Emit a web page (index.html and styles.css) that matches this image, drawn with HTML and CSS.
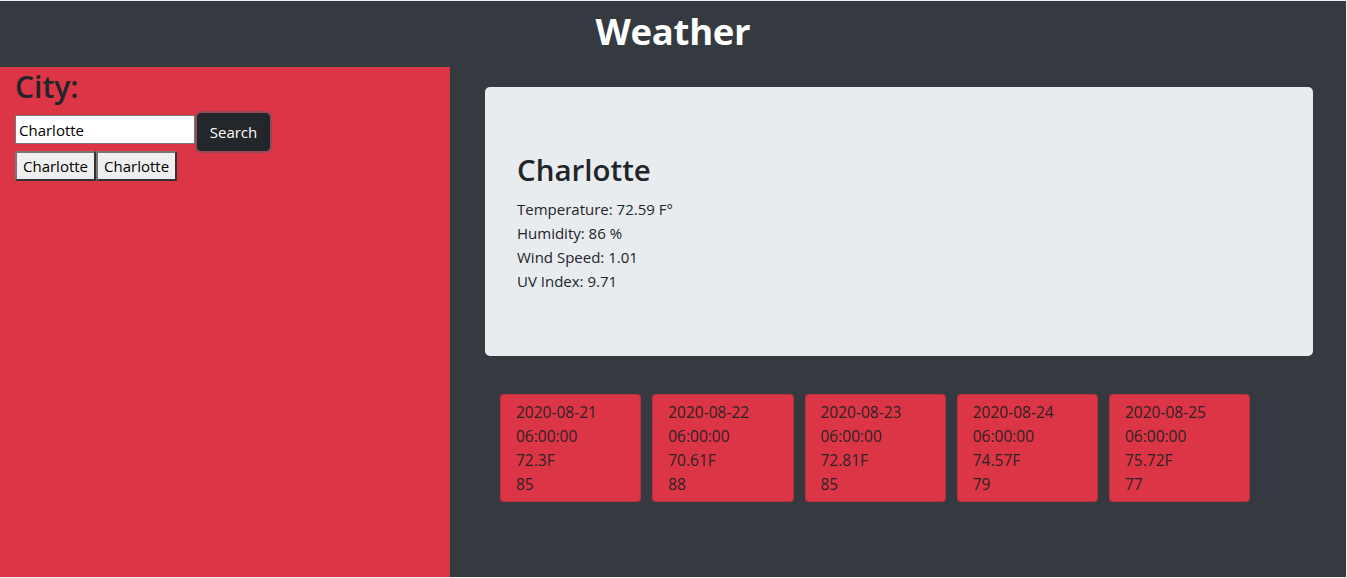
FILE: index.html
```html
<!DOCTYPE html>
<html>
<head>
<meta charset="utf-8">
<link rel="stylesheet" href="styles.css">
</head>
<body>
<div class="app">
  <header class="topbar"><h1 class="title">Weather</h1></header>
  <div class="main">
    <aside class="sidebar">
      <h2 class="city-label">City:</h2>
      <div class="search-row">
        <input class="city-input" type="text" value="Charlotte">
        <button class="search-btn">Search</button>
      </div>
      <div class="history">
        <button class="hist-btn">Charlotte</button><button class="hist-btn">Charlotte</button>
      </div>
    </aside>
    <section class="content">
      <div class="jumbo">
        <h2 class="jumbo-city">Charlotte</h2>
        <div class="stat">Temperature: 72.59 F°</div>
        <div class="stat">Humidity: 86 %</div>
        <div class="stat">Wind Speed: 1.01</div>
        <div class="stat">UV Index: 9.71</div>
      </div>
      <div class="forecast">
        <div class="fcard"><div>2020-08-21</div><div>06:00:00</div><div>72.3F</div><div>85</div></div>
        <div class="fcard"><div>2020-08-22</div><div>06:00:00</div><div>70.61F</div><div>88</div></div>
        <div class="fcard"><div>2020-08-23</div><div>06:00:00</div><div>72.81F</div><div>85</div></div>
        <div class="fcard"><div>2020-08-24</div><div>06:00:00</div><div>74.57F</div><div>79</div></div>
        <div class="fcard"><div>2020-08-25</div><div>06:00:00</div><div>75.72F</div><div>77</div></div>
      </div>
    </section>
  </div>
</div>
</body>
</html>
```
FILE: styles.css
```css
html, body {
  margin: 0;
  padding: 0;
}
body {
  background: #f0f0f0;
  font-family: "Open Sans", "Noto Sans", sans-serif;
  font-size: 16px;
  color: #212529;
}
.app {
  margin: 1px 1px 1px 0;
  height: 576px;
  background: #343a40;
  display: flex;
  flex-direction: column;
}
.topbar {
  height: 66px;
  flex: none;
  display: flex;
  justify-content: center;
}
.title {
  margin: 6px 0 0 0;
  font-size: 36.5px;
  line-height: 48px;
  font-weight: 700;
  color: #ffffff;
  letter-spacing: -0.3px;
}
.main {
  flex: 1;
  display: flex;
}
.sidebar {
  width: 420px;
  flex: none;
  background: #dc3545;
  padding: 0 15px;
}
.city-label {
  margin: 1px 0 7px 0;
  font-size: 30px;
  line-height: 38px;
  font-weight: 600;
  color: #212529;
}
.search-row {
  display: flex;
  align-items: flex-start;
  height: 38px;
}
.city-input {
  width: 180px;
  height: 29px;
  margin: 2px 0 0 0;
  box-sizing: border-box;
  border: 1px solid #767676;
  padding: 1px 3px;
  font-family: inherit;
  font-size: 15px;
  color: #000;
  background: #fff;
}
.search-btn {
  margin-left: 2px;
  height: 38px;
  width: 73px;
  border: 1px solid #212529;
  border-radius: 4px;
  background: #23272b;
  color: #fff;
  font-family: inherit;
  font-size: 15px;
  box-shadow: 0 0 0 2px rgba(130, 80, 90, 0.8);
  padding: 0;
}
.history {
  display: flex;
}
.hist-btn {
  height: 30px;
  box-sizing: border-box;
  border: 2px solid;
  border-color: #767676 #333 #333 #767676;
  background: #efefef;
  color: #000;
  font-family: inherit;
  font-size: 15px;
  padding: 0 6px;
  margin: 0;
}
.content {
  flex: 1;
  padding: 20px 33px 0 35px;
}
.jumbo {
  background: #e9ecef;
  border-radius: 5px;
  padding: 64px 32px;
  height: 269px;
  box-sizing: border-box;
}
.jumbo-city {
  margin: 0 0 8px 0;
  font-size: 29.5px;
  line-height: 38px;
  font-weight: 600;
}
.stat {
  font-size: 15px;
  line-height: 24px;
}
.forecast {
  display: flex;
  gap: 11px;
  margin: 38px 0 0 15px;
}
.fcard {
  width: 141.25px;
  box-sizing: border-box;
  background: #dc3545;
  border: 1px solid rgba(0, 0, 0, 0.12);
  border-radius: 4px;
  padding: 5px 15px;
  font-size: 15.5px;
  line-height: 24px;
  color: #2e2127;
}
```
